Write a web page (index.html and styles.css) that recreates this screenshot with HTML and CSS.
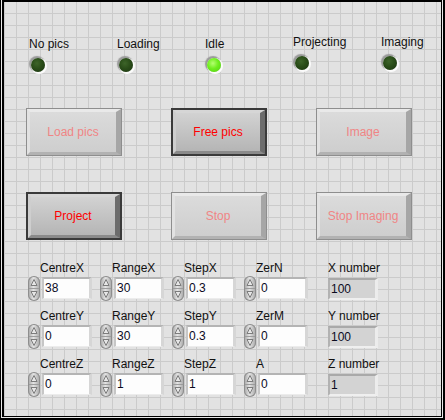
FILE: index.html
```html
<!DOCTYPE html>
<html>
<head>
<meta charset="utf-8">
<link rel="stylesheet" href="styles.css">
</head>
<body>
<div class="frame">
  <div class="panel">
    <div class="leds">
      <div class="ind"><div class="lbl">No pics</div><div class="led"></div></div>
      <div class="ind"><div class="lbl">Loading</div><div class="led"></div></div>
      <div class="ind"><div class="lbl">Idle</div><div class="led lit"></div></div>
      <div class="ind up"><div class="lbl">Projecting</div><div class="led"></div></div>
      <div class="ind up"><div class="lbl">Imaging</div><div class="led"></div></div>
    </div>

    <div class="buttons">
      <div class="btn"><div class="face">Load pics</div></div>
      <div class="btn on"><div class="face">Free pics</div></div>
      <div class="btn"><div class="face">Image</div></div>
      <div class="btn on"><div class="face">Project</div></div>
      <div class="btn"><div class="face">Stop</div></div>
      <div class="btn"><div class="face">Stop Imaging</div></div>
    </div>

    <div class="nums">
      <div class="ctl"><div class="lbl">CentreX</div><div class="ctlrow"><span class="spin"><svg width="12" height="25" viewBox="0 0 12 25"><line x1="1" y1="12.5" x2="11" y2="12.5" stroke="#9c9c9c"/><path d="M6 3.5 L9 9.5 H3 Z" fill="#e6e6e6" stroke="#7c7c7c"/><path d="M6 21.5 L9 15.5 H3 Z" fill="#e6e6e6" stroke="#7c7c7c"/></svg></span><div class="field">38</div></div></div>
      <div class="ctl"><div class="lbl">RangeX</div><div class="ctlrow"><span class="spin"><svg width="12" height="25" viewBox="0 0 12 25"><line x1="1" y1="12.5" x2="11" y2="12.5" stroke="#9c9c9c"/><path d="M6 3.5 L9 9.5 H3 Z" fill="#e6e6e6" stroke="#7c7c7c"/><path d="M6 21.5 L9 15.5 H3 Z" fill="#e6e6e6" stroke="#7c7c7c"/></svg></span><div class="field">30</div></div></div>
      <div class="ctl"><div class="lbl">StepX</div><div class="ctlrow"><span class="spin"><svg width="12" height="25" viewBox="0 0 12 25"><line x1="1" y1="12.5" x2="11" y2="12.5" stroke="#9c9c9c"/><path d="M6 3.5 L9 9.5 H3 Z" fill="#e6e6e6" stroke="#7c7c7c"/><path d="M6 21.5 L9 15.5 H3 Z" fill="#e6e6e6" stroke="#7c7c7c"/></svg></span><div class="field">0.3</div></div></div>
      <div class="ctl"><div class="lbl">ZerN</div><div class="ctlrow"><span class="spin"><svg width="12" height="25" viewBox="0 0 12 25"><line x1="1" y1="12.5" x2="11" y2="12.5" stroke="#9c9c9c"/><path d="M6 3.5 L9 9.5 H3 Z" fill="#e6e6e6" stroke="#7c7c7c"/><path d="M6 21.5 L9 15.5 H3 Z" fill="#e6e6e6" stroke="#7c7c7c"/></svg></span><div class="field">0</div></div></div>
      <div class="ctl out"><div class="lbl">X number</div><div class="ctlrow"><div class="field ro">100</div></div></div>

      <div class="ctl"><div class="lbl">CentreY</div><div class="ctlrow"><span class="spin"><svg width="12" height="25" viewBox="0 0 12 25"><line x1="1" y1="12.5" x2="11" y2="12.5" stroke="#9c9c9c"/><path d="M6 3.5 L9 9.5 H3 Z" fill="#e6e6e6" stroke="#7c7c7c"/><path d="M6 21.5 L9 15.5 H3 Z" fill="#e6e6e6" stroke="#7c7c7c"/></svg></span><div class="field">0</div></div></div>
      <div class="ctl"><div class="lbl">RangeY</div><div class="ctlrow"><span class="spin"><svg width="12" height="25" viewBox="0 0 12 25"><line x1="1" y1="12.5" x2="11" y2="12.5" stroke="#9c9c9c"/><path d="M6 3.5 L9 9.5 H3 Z" fill="#e6e6e6" stroke="#7c7c7c"/><path d="M6 21.5 L9 15.5 H3 Z" fill="#e6e6e6" stroke="#7c7c7c"/></svg></span><div class="field">30</div></div></div>
      <div class="ctl"><div class="lbl">StepY</div><div class="ctlrow"><span class="spin"><svg width="12" height="25" viewBox="0 0 12 25"><line x1="1" y1="12.5" x2="11" y2="12.5" stroke="#9c9c9c"/><path d="M6 3.5 L9 9.5 H3 Z" fill="#e6e6e6" stroke="#7c7c7c"/><path d="M6 21.5 L9 15.5 H3 Z" fill="#e6e6e6" stroke="#7c7c7c"/></svg></span><div class="field">0.3</div></div></div>
      <div class="ctl"><div class="lbl">ZerM</div><div class="ctlrow"><span class="spin"><svg width="12" height="25" viewBox="0 0 12 25"><line x1="1" y1="12.5" x2="11" y2="12.5" stroke="#9c9c9c"/><path d="M6 3.5 L9 9.5 H3 Z" fill="#e6e6e6" stroke="#7c7c7c"/><path d="M6 21.5 L9 15.5 H3 Z" fill="#e6e6e6" stroke="#7c7c7c"/></svg></span><div class="field">0</div></div></div>
      <div class="ctl out"><div class="lbl">Y number</div><div class="ctlrow"><div class="field ro">100</div></div></div>

      <div class="ctl"><div class="lbl">CentreZ</div><div class="ctlrow"><span class="spin"><svg width="12" height="25" viewBox="0 0 12 25"><line x1="1" y1="12.5" x2="11" y2="12.5" stroke="#9c9c9c"/><path d="M6 3.5 L9 9.5 H3 Z" fill="#e6e6e6" stroke="#7c7c7c"/><path d="M6 21.5 L9 15.5 H3 Z" fill="#e6e6e6" stroke="#7c7c7c"/></svg></span><div class="field">0</div></div></div>
      <div class="ctl"><div class="lbl">RangeZ</div><div class="ctlrow"><span class="spin"><svg width="12" height="25" viewBox="0 0 12 25"><line x1="1" y1="12.5" x2="11" y2="12.5" stroke="#9c9c9c"/><path d="M6 3.5 L9 9.5 H3 Z" fill="#e6e6e6" stroke="#7c7c7c"/><path d="M6 21.5 L9 15.5 H3 Z" fill="#e6e6e6" stroke="#7c7c7c"/></svg></span><div class="field">1</div></div></div>
      <div class="ctl"><div class="lbl">StepZ</div><div class="ctlrow"><span class="spin"><svg width="12" height="25" viewBox="0 0 12 25"><line x1="1" y1="12.5" x2="11" y2="12.5" stroke="#9c9c9c"/><path d="M6 3.5 L9 9.5 H3 Z" fill="#e6e6e6" stroke="#7c7c7c"/><path d="M6 21.5 L9 15.5 H3 Z" fill="#e6e6e6" stroke="#7c7c7c"/></svg></span><div class="field">1</div></div></div>
      <div class="ctl"><div class="lbl">A</div><div class="ctlrow"><span class="spin"><svg width="12" height="25" viewBox="0 0 12 25"><line x1="1" y1="12.5" x2="11" y2="12.5" stroke="#9c9c9c"/><path d="M6 3.5 L9 9.5 H3 Z" fill="#e6e6e6" stroke="#7c7c7c"/><path d="M6 21.5 L9 15.5 H3 Z" fill="#e6e6e6" stroke="#7c7c7c"/></svg></span><div class="field">0</div></div></div>
      <div class="ctl out"><div class="lbl">Z number</div><div class="ctlrow"><div class="field ro">1</div></div></div>
    </div>
  </div>
</div>
</body>
</html>
```
FILE: styles.css
```css
* { box-sizing: border-box; }
html, body { margin: 0; padding: 0; }
body {
  width: 445px;
  height: 420px;
  overflow: hidden;
  font-family: "Liberation Sans", Arial, sans-serif;
  font-size: 12px;
  color: #111;
  background: #e1e1e1;
}
.frame {
  width: 445px;
  height: 420px;
  border: solid #000;
  border-width: 0 2px 2px 1px;
  padding: 0 1px 1px 1px;
  background: #e8e8e8;
}
.panel {
  height: 100%;
  border: solid #000;
  border-width: 2px 1px 1px 2px;
  background-color: #e2e2e2;
  background-image:
    linear-gradient(to right, #cbcbcb 1px, transparent 1px),
    linear-gradient(to bottom, #cbcbcb 1px, transparent 1px);
  background-size: 12px 12px;
  background-position: 0 11px;
}
.lbl {
  line-height: 14px;
  white-space: nowrap;
}
/* LEDs */
.leds {
  display: flex;
  align-items: flex-start;
  padding: 35px 0 0 25px;
}
.ind { width: 88px; flex-shrink: 0; }
.ind:last-child { width: auto; }
.ind.up { margin-top: -2px; }
.led {
  width: 14px;
  height: 14px;
  margin: 7px 0 0 2px;
  border-radius: 50%;
  background: radial-gradient(circle at 42% 38%, #3d6429 0, #2a4d19 45%, #1b3410 100%);
  box-shadow: 1px 1px 0 1px #fbfbfb, -1px -1px 1px 1px #9a9a9a;
}
.led.lit {
  background: radial-gradient(circle at 42% 38%, #b4ff70 0, #6fee1e 45%, #4fcc10 100%);
}
/* Buttons */
.buttons {
  display: grid;
  grid-template-columns: repeat(3, 96px);
  column-gap: 49px;
  row-gap: 36px;
  padding-left: 22px;
  margin-top: 36px;
}
.btn {
  height: 48px;
  border: 1px solid #8e8e8e;
}
.btn.on { border: 2px solid #3a3a3a; }
.face {
  height: 100%;
  display: flex;
  align-items: center;
  justify-content: center;
  border-style: solid;
  border-width: 3px 5px 3px 3px;
  border-color: #e9e9e9 #a6a6a6 #b2b2b2 #e2e2e2;
  background: linear-gradient(#dbdbdb, #cecece);
  color: #f08585;
  white-space: nowrap;
}
.on .face {
  border-color: #d6d6d6 #6c6c6c #8a8a8a #cecece;
  background: linear-gradient(#d2d2d2, #b5b5b5);
  color: #ff0000;
}
/* Numerics */
.nums {
  display: grid;
  grid-template-columns: repeat(5, 72px);
  row-gap: 8px;
  padding-left: 24px;
  margin-top: 21px;
}
.ctl .lbl { margin-left: 12px; }
.ctlrow {
  display: flex;
  align-items: flex-start;
  margin-top: 1px;
}
.spin {
  display: block;
  width: 12px;
  height: 25px;
  border-radius: 6px;
  background: linear-gradient(to right, #a2a2a2, #e4e4e4 45%, #a6a6a6);
  box-shadow: inset 0 0 0 1px #8e8e8e;
}
.spin svg { display: block; }
.field {
  width: 50px;
  height: 22px;
  margin: 1px 0 0 2px;
  padding-left: 1px;
  border-style: solid;
  border-width: 2px 3px 1px 2px;
  border-color: #b4b4b4 #d6d6d6 #ececec #c6c6c6;
  background: #fdfdfd;
  line-height: 19px;
  color: #0b0b1e;
}
.out .ctlrow { margin-left: 12px; }
.field.ro {
  margin: 2px 0 0 0;
  border-width: 2px 3px 2px 2px;
  border-color: #a9a9a9 #ececec #efefef #b2b2b2;
  background: #d3d3d3;
  line-height: 18px;
}
```
